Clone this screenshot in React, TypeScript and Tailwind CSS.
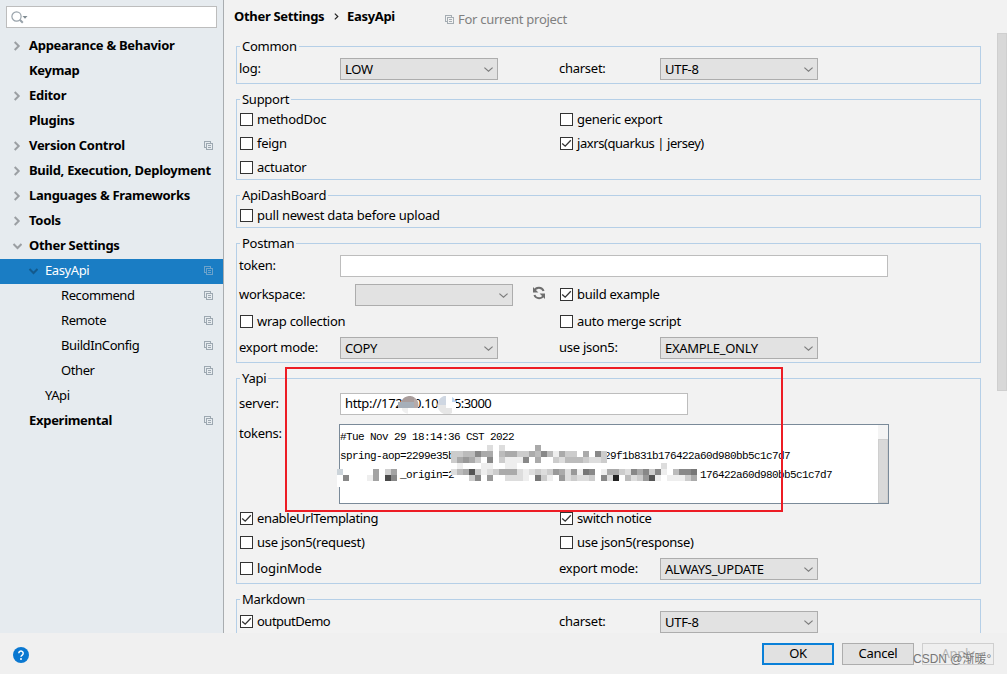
import type { ReactNode } from 'react';
import clsx from 'clsx';

type TreeItem = {
  label: string;
  level: number;
  arrow?: 'right' | 'down';
  bold?: boolean;
  project?: boolean;
  selected?: boolean;
};

const treeItems: TreeItem[] = [
  { label: 'Appearance & Behavior', level: 0, arrow: 'right', bold: true },
  { label: 'Keymap', level: 0, bold: true },
  { label: 'Editor', level: 0, arrow: 'right', bold: true },
  { label: 'Plugins', level: 0, bold: true },
  { label: 'Version Control', level: 0, arrow: 'right', bold: true, project: true },
  { label: 'Build, Execution, Deployment', level: 0, arrow: 'right', bold: true },
  { label: 'Languages & Frameworks', level: 0, arrow: 'right', bold: true },
  { label: 'Tools', level: 0, arrow: 'right', bold: true },
  { label: 'Other Settings', level: 0, arrow: 'down', bold: true },
  { label: 'EasyApi', level: 1, arrow: 'down', project: true, selected: true },
  { label: 'Recommend', level: 2, project: true },
  { label: 'Remote', level: 2, project: true },
  { label: 'BuildInConfig', level: 2, project: true },
  { label: 'Other', level: 2, project: true },
  { label: 'YApi', level: 1 },
  { label: 'Experimental', level: 0, bold: true, project: true },
];

function ProjectIcon({ className }: { className?: string }) {
  return (
    <svg className={className} width="9" height="9" viewBox="0 0 9 9" fill="none" stroke="currentColor" shapeRendering="crispEdges">
      <path d="M2 6.5H.5V.5h6V2" />
      <path d="M2.5 2.5h6v6h-6zM4 4.5h3M4 6.5h3" />
    </svg>
  );
}

function TreeArrow({ dir, dark }: { dir: 'right' | 'down'; dark?: boolean }) {
  return (
    <svg width="11" height="10" viewBox="0 0 11 10" fill="none" stroke={dark ? '#135a8d' : '#9b9fa3'} strokeWidth="2">
      {dir === 'right' ? <path d="M3.7 1l4 4-4 4" /> : <path d="M2.5 3l4 4 4-4" />}
    </svg>
  );
}

function TreeRow({ item }: { item: TreeItem }) {
  return (
    <div
      className={clsx(
        'flex h-[25px] items-center pr-2.5 pb-0.5',
        item.level === 0 && 'pl-[11px]',
        item.level === 1 && 'pl-[27px]',
        item.level === 2 && 'pl-[43px]',
        item.selected && 'bg-[#1a7dc4] text-white',
        item.bold ? 'font-bold tracking-[-0.29px]' : 'tracking-[-0.4px]',
      )}
    >
      <span className="w-[18px] shrink-0">{item.arrow && <TreeArrow dir={item.arrow} dark={item.selected} />}</span>
      <span className="relative -top-px grow whitespace-nowrap">{item.label}</span>
      {item.project && <ProjectIcon className={item.selected ? 'text-[#6ba2cb]' : 'text-[#9da8b1]'} />}
    </div>
  );
}

function Group({ title, className, children }: { title: string; className: string; children?: ReactNode }) {
  return (
    <div className={clsx('relative ml-[12px] flex w-[745px] shrink-0 flex-col border border-[#b5cfe7] pl-0.5', className)}>
      <span className="absolute -top-[10px] left-[3px] bg-[#f2f2f2] px-0.5 leading-[18px]">{title}</span>
      {children}
    </div>
  );
}

function Row({ className, children }: { className: string; children: ReactNode }) {
  return <div className={clsx('flex shrink-0 items-center', className)}>{children}</div>;
}

function Cell({ children }: { children?: ReactNode }) {
  return <div className="flex h-full w-80 shrink-0 items-center">{children}</div>;
}

function Label({ children }: { children: ReactNode }) {
  return <span className="w-[101px] shrink-0 pb-0.5 whitespace-nowrap">{children}</span>;
}

function Select({ value, className }: { value?: string; className?: string }) {
  return (
    <div className={clsx('flex h-[22px] w-[158px] shrink-0 items-center justify-between border border-[#adadad] bg-[#e2e2e2] pr-1 pl-1', className)}>
      <span className="tracking-[-0.3px]">{value}</span>
      <svg width="9" height="5" viewBox="0 0 9 5" fill="none" stroke="#7c7c7c" strokeWidth="1.2">
        <path d="M.4.6l4.1 3.6L8.6.6" />
      </svg>
    </div>
  );
}

function Check({ label, checked, className }: { label: string; checked?: boolean; className?: string }) {
  return (
    <div className={clsx('ml-px flex h-[13px] items-center whitespace-nowrap', className)}>
      <span className="mr-1 block size-[13px] shrink-0 border border-[#333] bg-white">
        {checked && (
          <svg width="11" height="11" viewBox="0 0 11 11" fill="none" stroke="#333" strokeWidth="1.3">
            <path d="M1.2 5.4l3 2.8L9.8 2.3" />
          </svg>
        )}
      </span>
      <span className="pb-px">{label}</span>
    </div>
  );
}

// One hex digit per 6px cell, anything else is left empty
function Pixels({ rows, className }: { rows: string[]; className: string }) {
  const cols = Math.max(...rows.map((r) => r.length));
  return (
    <svg className={clsx('absolute', className)} width={cols * 6} height={rows.length * 6} shapeRendering="crispEdges">
      {rows.map((row, y) =>
        row.split('').map((c, x) =>
          c === '.' ? null : <rect key={`${x}-${y}`} x={x * 6} y={y * 6} width="6" height="6" fill={`#${c}${c}${c}`} />,
        ),
      )}
    </svg>
  );
}

const tokenPixels = [
  '.......d.d.....a',
  '.ccbb8aafbaaccab8beaccfaf8c',
  '.ca9acf8fceee8faffcdbbbcddc',
  '.fe...eeffee..........ff.f..........d',
  '.dba5cedcaaadedcdc9ad9e78feaacd8a8c8efb887',
  '....c8f9ffdddef7cef9dcddcf8d2fbdc95efeeeca',
];

function Server() {
  return (
    <div className="relative flex h-[22px] w-[348px] items-center border border-[#bdbdbd] bg-white pb-0.5 pl-1 tracking-[-0.35px]">
      <span className="w-[69px]">http://172</span>
      <span className="w-[40px]">0.10</span>
      <span className="tracking-[-0.6px]">5:3000</span>
      <svg className="absolute top-[2px] left-[57px]" width="62" height="18">
        <clipPath id="blobs">
          <path d="M0 6h3a9 9 0 1 1 0 6H0z" />
          <circle cx="49" cy="9" r="9.5" />
        </clipPath>
        <g clipPath="url(#blobs)" shapeRendering="crispEdges">
          <path fill="#fff" d="M0 0h62v18H0z" />
          <path fill="#a99d9c" d="M3 0h13v6H3z" />
          <path fill="#a6afb9" d="M0 6h16v6H0z" />
          <path fill="#b5aaa9" d="M16 0h6v12h-6z" />
          <path fill="#f0f0f0" d="M4 12h6v6H4z" />
          <path fill="#cfd7e2" d="M39 0h9v9h-9z" />
          <path fill="#bad3ef" d="M54 0h8v6h-8z" />
          <path fill="#e6e6e6" d="M39 9h9v9h-9zM48 12h6v6h-6z" />
        </g>
      </svg>
    </div>
  );
}

function Tokens() {
  return (
    <div className="relative -ml-px flex h-20 w-[550px] justify-between border border-[#7a8a99] bg-white">
      <div className="pt-[3px] font-['Liberation_Mono',monospace] text-[11px] leading-[19px] tracking-[-0.6px] text-black">
        <p>#Tue Nov 29 18:14:36 CST 2022</p>
        <p className="flex">
          <span className="w-[264px]">spring-aop=2299e35b</span>
          <span>29f1b831b176422a60d980bb5c1c7d7</span>
        </p>
        <p className="flex pl-[60px]">
          <span className="w-[300px]">_origin=2</span>
          <span>176422a60d980bb5c1c7d7</span>
        </p>
      </div>
      <div className="w-2.5 bg-[#f4f4f4] pt-3.5">
        <div className="h-full border border-[#cfcfcf] bg-[#d9d9d9]" />
      </div>
      <Pixels className="top-5 left-[105px]" rows={tokenPixels} />
      <svg className="absolute top-[44px] -left-[3px]" width="60" height="18" shapeRendering="crispEdges">
        <path fill="#fff" d="M0 0h60v12H6v6H0z" />
        <path fill="#ccd4da" d="M0 0h6v6H0z" />
        <path fill="#888" d="M6 6h6v6H6zM54 6h6v6h-6z" />
        <path fill="#eee" d="M30 6h6v6h-6z" />
        <path fill="#a3a3a3" d="M36 0h6v12h-6zM54 0h6v6h-6z" />
        <path fill="#d0d0d0" d="M48 0h6v6h-6z" />
        <path fill="#4a4a4a" d="M48 6h6v6h-6z" />
      </svg>
    </div>
  );
}

function RefreshIcon() {
  return (
    <svg className="relative -top-0.5 ml-[19px]" width="14" height="14" viewBox="0 0 14 14" fill="none" stroke="#6e6e6e" strokeWidth="2">
      <path d="M2.2 5.3A5 5 0 0 1 11.6 5M11.8 8.7A5 5 0 0 1 2.4 9" />
      <path fill="#6e6e6e" stroke="none" d="M1 1v5.4h5.4zM13 13V7.6H7.6z" />
    </svg>
  );
}

function Button({ label, className }: { label: string; className: string }) {
  return <div className={clsx('flex h-[22px] w-[72px] items-center justify-center pb-0.5', className)}>{label}</div>;
}

export default function App() {
  return (
    <div className="relative flex h-[674px] w-[1007px] flex-col overflow-hidden bg-[#f0f0f0] font-['Noto_Sans',sans-serif] text-[13px] leading-[18px] tracking-[-0.27px] text-black">
      <div className="flex h-[633px] shrink-0 overflow-hidden">
        <aside className="w-[224px] shrink-0 border-r border-[#a9adb0] bg-[#e6ebef]">
          <div className="mt-1.5 ml-1.5 flex h-[22px] w-[211px] items-center border border-[#bdbdbd] bg-white pl-1">
            <svg width="17" height="13" viewBox="0 0 17 13" fill="none" stroke="#98a2aa" strokeWidth="1.2">
              <circle cx="5.5" cy="5.5" r="4.6" />
              <path strokeWidth="2" d="M8.8 8.8l3 3" />
              <path fill="#7f8b91" stroke="none" d="M11.5 5h5L14 7.8z" />
            </svg>
          </div>
          <nav className="mt-1.5">
            {treeItems.map((item) => (
              <TreeRow key={item.label} item={item} />
            ))}
          </nav>
        </aside>

        <main className="flex w-[773px] shrink-0 flex-col bg-[#f2f2f2]">
          <header className="flex h-[46px] shrink-0 items-start pt-[7px] pl-2.5 font-bold tracking-[-0.31px] whitespace-nowrap">
            <span className="w-[90px] shrink-0">Other Settings</span>
            <svg className="mt-[6px] ml-[10px]" width="5" height="7" viewBox="0 0 5 7" fill="none" stroke="#222" strokeWidth="1.2">
              <path d="M.8.6l3 2.9-3 2.9" />
            </svg>
            <span className="ml-[8px] w-[48px]">EasyApi</span>
            <span className="mt-[3px] ml-[50px] flex items-center gap-1 font-normal tracking-[-0.27px] text-[#808080]">
              <ProjectIcon className="text-[#a5adb3]" />
              For current project
            </span>
          </header>

          <div className="flex flex-col gap-[15px]">
            <Group title="Common" className="h-[38px] pt-[11px]">
              <Row className="h-[22px]">
                <Cell>
                  <Label>log:</Label>
                  <Select value="LOW" />
                </Cell>
                <Label>charset:</Label>
                <Select value="UTF-8" />
              </Row>
            </Group>

            <Group title="Support" className="h-[81px] gap-[11px] pt-[13px]">
              <Row className="h-[13px]">
                <Cell><Check label="methodDoc" /></Cell>
                <Check label="generic export" />
              </Row>
              <Row className="h-[13px]">
                <Cell><Check label="feign" /></Cell>
                <Check label="jaxrs(quarkus | jersey)" checked className="tracking-[-0.43px]" />
              </Row>
              <Row className="h-[13px]">
                <Check label="actuator" />
              </Row>
            </Group>

            <Group title="ApiDashBoard" className="h-[33px] pt-[13px]">
              <Row className="h-[13px]">
                <Check label="pull newest data before upload" className="tracking-[-0.23px]" />
              </Row>
            </Group>

            <Group title="Postman" className="h-[120px] pt-[11px]">
              <Row className="h-[22px]">
                <Label>token:</Label>
                <div className="h-[22px] w-[548px] border border-[#bdbdbd] bg-white" />
              </Row>
              <Row className="mt-[7px] h-[22px]">
                <Cell>
                  <Label>workspace:</Label>
                  <Select className="ml-[15px]" />
                  <RefreshIcon />
                </Cell>
                <Check label="build example" checked className="mb-px" />
              </Row>
              <Row className="mt-[9px] h-[13px]">
                <Cell><Check label="wrap collection" /></Cell>
                <Check label="auto merge script" />
              </Row>
              <Row className="mt-[9px] h-[22px]">
                <Cell>
                  <Label>export mode:</Label>
                  <Select value="COPY" />
                </Cell>
                <Label>use json5:</Label>
                <Select value="EXAMPLE_ONLY" />
              </Row>
            </Group>

            <Group title="Yapi" className="h-[206px] pt-[14px]">
              <Row className="h-[22px]">
                <Label>server:</Label>
                <Server />
              </Row>
              <div className="mt-[9px] flex h-20 shrink-0">
                <span className="w-[101px] shrink-0">tokens:</span>
                <Tokens />
              </div>
              <Row className="mt-2 h-[13px]">
                <Cell><Check label="enableUrlTemplating" checked className="tracking-[-0.37px]" /></Cell>
                <Check label="switch notice" checked className="tracking-[-0.4px]" />
              </Row>
              <Row className="mt-[11px] h-[13px]">
                <Cell><Check label="use json5(request)" /></Cell>
                <Check label="use json5(response)" />
              </Row>
              <Row className="mt-[9px] h-[22px]">
                <Cell><Check label="loginMode" className="mb-px tracking-[-0.1px]" /></Cell>
                <Label>export mode:</Label>
                <Select value="ALWAYS_UPDATE" />
              </Row>
            </Group>

            <Group title="Markdown" className="h-[60px] pt-[11px]">
              <Row className="h-[22px]">
                <Cell><Check label="outputDemo" checked className="mb-px tracking-[-0.5px]" /></Cell>
                <Label>charset:</Label>
                <Select value="UTF-8" />
              </Row>
            </Group>
          </div>
        </main>

        <div className="w-2.5 bg-[#f2f2f2] pt-[33px]">
          <div className="h-[358px] border border-[#cfcfcf] bg-[#d8d8d8]" />
        </div>
      </div>

      <footer className="flex grow items-start pt-2.5 pr-[13px] pl-[13px]">
        <svg className="mt-1" width="16" height="16" viewBox="0 0 16 16">
          <circle cx="8" cy="8" r="8" fill="#0a78d1" />
          <path d="M5.8 6.3a2.2 2.2 0 1 1 3.4 1.8C8.4 8.7 8 9 8 9.8" fill="none" stroke="#fff" strokeWidth="1.5" />
          <circle cx="8" cy="12" r="1" fill="#fff" />
        </svg>
        <div className="ml-auto flex gap-2">
          <Button label="OK" className="border-2 border-[#0a80d8] bg-[#e1e1e1]" />
          <Button label="Cancel" className="border border-[#adadad] bg-[#e1e1e1]" />
          <Button label="Apply" className="border border-[#cfcfcf] bg-[#efefef] text-[#b5b5b5]" />
        </div>
      </footer>

      <div className="pointer-events-none absolute top-[367px] left-[285px] h-[145px] w-[498px] border-2 border-[#ed1c24]" />
      <span className="absolute top-[650px] left-[913px] font-['Liberation_Sans','Noto_Sans_CJK_SC',sans-serif] text-[12px] tracking-normal whitespace-nowrap text-[#777]">
        CSDN @渐暖°
      </span>
    </div>
  );
}
